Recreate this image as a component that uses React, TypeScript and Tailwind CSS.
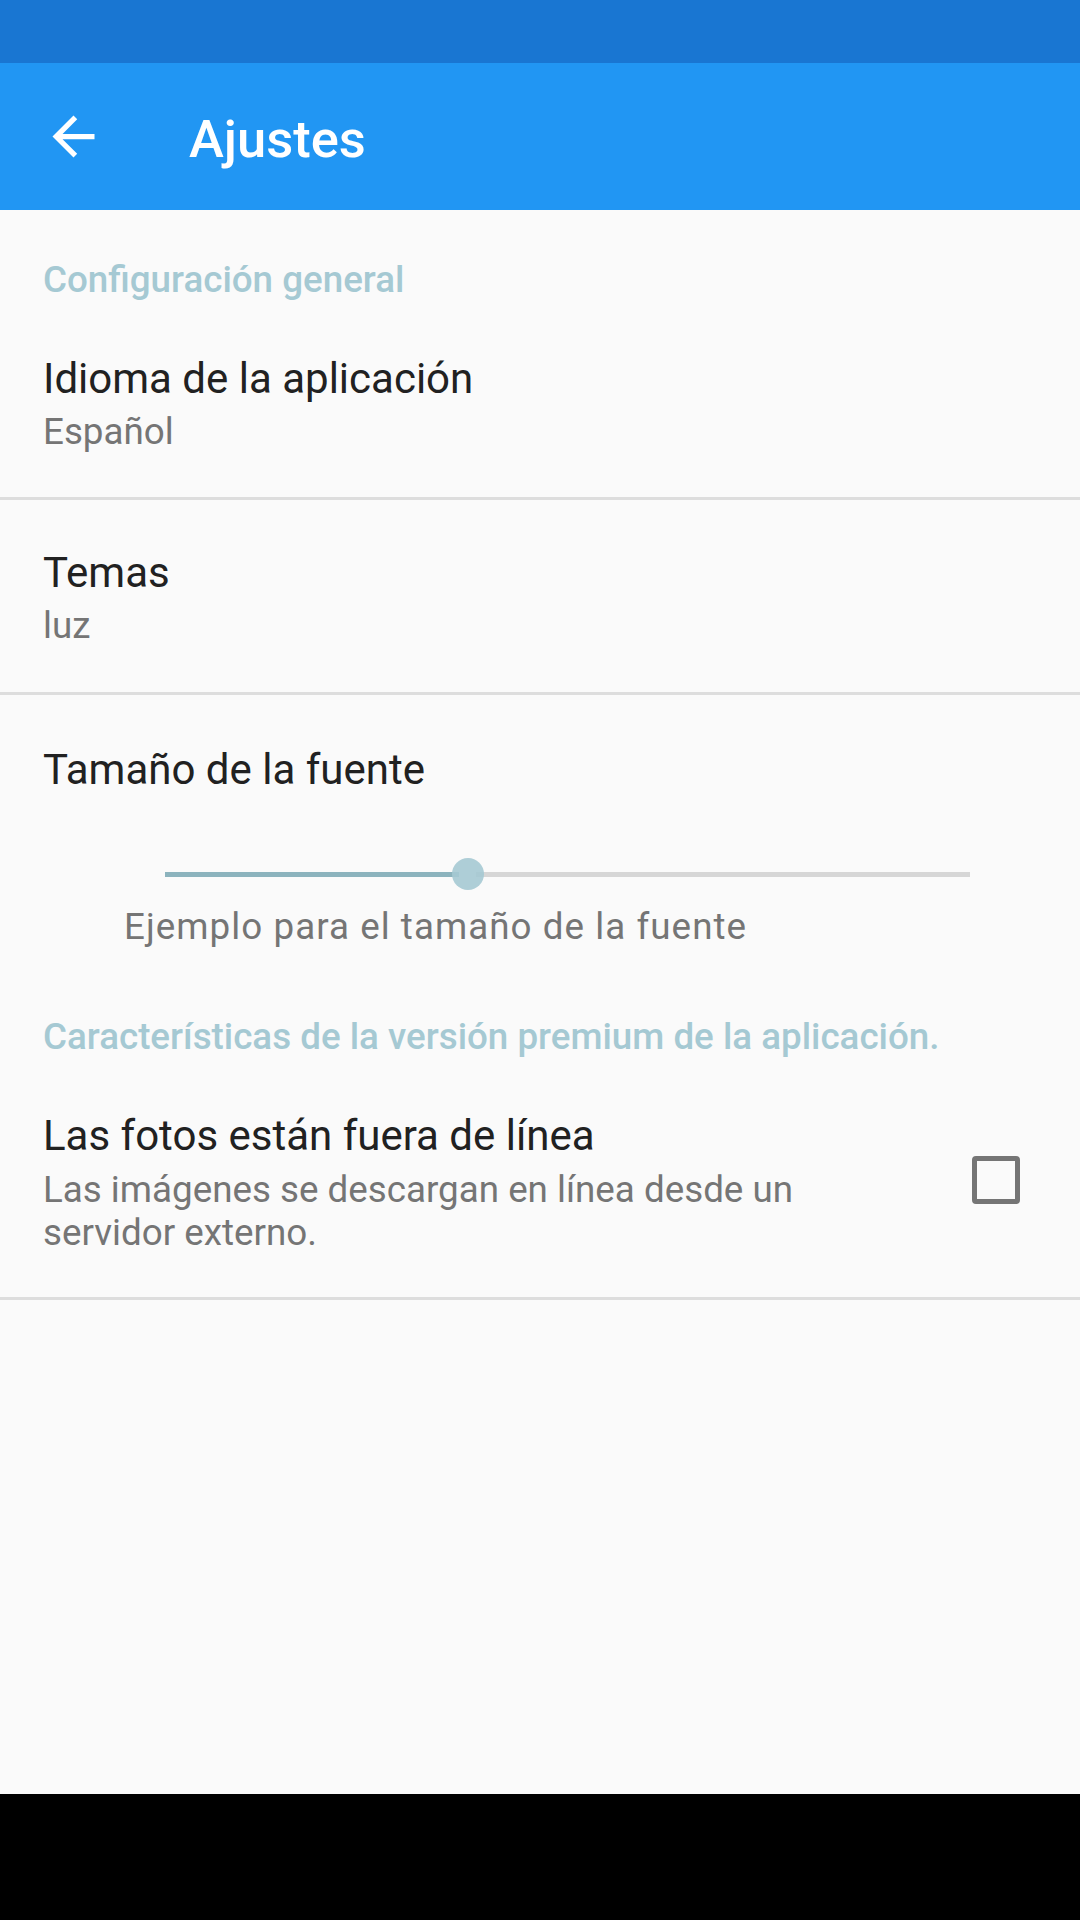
const font = { fontFamily: "Roboto, 'Noto Sans', sans-serif" };

function BackArrow() {
  return (
    <svg width="63" height="63" viewBox="0 0 24 24" fill="white">
      <path d="M20 11H7.83l5.59-5.59L12 4l-8 8 8 8 1.41-1.41L7.83 13H20v-2z" />
    </svg>
  );
}

function Divider() {
  return <div className="h-[3px] bg-[#dddddd]" />;
}

function Header({ text, pt }: { text: string; pt: string }) {
  return (
    <div className={`px-[43px] ${pt} text-[36.75px] leading-[43px] font-medium text-[#a5c9d3]`}>
      {text}
    </div>
  );
}

function Pref({ title, summary, pt, pb }: { title: string; summary: string; pt: string; pb: string }) {
  return (
    <div className={`px-[43px] ${pt} ${pb} flex flex-col`}>
      <div className="text-[42px] leading-[49px] text-[#212121]">{title}</div>
      <div className="mt-[7px] text-[36.75px] leading-[43px] text-[#757575]">{summary}</div>
    </div>
  );
}

function FontSlider() {
  return (
    <div className="mt-[64px] pl-[165px] pr-[110px]">
      <div className="relative h-[32px] flex items-center">
        <div className="h-[5px] w-[294px] bg-[#8cb3bd]" />
        <div className="h-[5px] w-[17px]" />
        <div className="h-[5px] flex-1 bg-[#d6d6d6]" />
        <div className="absolute left-[287px] top-0 w-[32px] h-[32px] rounded-full bg-[#a5c9d3] opacity-90" />
      </div>
    </div>
  );
}

export default function App() {
  return (
    <div className="w-[1080px] h-[1920px] flex flex-col bg-[#fafafa]" style={font}>
      <div className="h-[63px] bg-[#1976d2]" />
      <div className="h-[147px] bg-[#2196f3] flex items-center">
        <div className="ml-[42px] w-[63px] h-[63px]">
          <BackArrow />
        </div>
        <div className="ml-[84px] pt-[5px] text-[52.5px] font-medium text-white leading-[62px]">Ajustes</div>
      </div>

      <div className="flex-1 flex flex-col">
        <Header text="Configuración general" pt="pt-[48px]" />
        <Pref title="Idioma de la aplicación" summary="Español" pt="pt-[53px]" pb="pb-[44px]" />
        <Divider />
        <Pref title="Temas" summary="luz" pt="pt-[48px]" pb="pb-[45px]" />
        <Divider />

        <div className="pt-[50px] flex flex-col">
          <div className="px-[43px] text-[42px] leading-[49px] text-[#212121]">Tamaño de la fuente</div>
          <FontSlider />
          <div className="mt-[15px] pl-[124px] text-[36.75px] tracking-[1.05px] leading-[43px] text-[#757575]">
            Ejemplo para el tamaño de la fuente
          </div>
        </div>

        <div className="mt-[67px]">
          <Header text="Características de la versión premium de la aplicación." pt="pt-0" />
        </div>

        <div className="pl-[43px] pr-[60px] pt-[53px] pb-[43px] flex items-center">
          <div className="flex-1 flex flex-col">
            <div className="text-[42px] leading-[49px] text-[#212121]">Las fotos están fuera de línea</div>
            <div className="mt-[8px] max-w-[830px] text-[36.75px] leading-[43px] text-[#757575]">
              Las imágenes se descargan en línea desde un servidor externo.
            </div>
          </div>
          <div className="mb-[5px] w-[48px] h-[48px] border-[5px] border-[#757575] rounded-[4px]" />
        </div>
        <Divider />
      </div>

      <div className="h-[126px] bg-black" />
    </div>
  );
}
